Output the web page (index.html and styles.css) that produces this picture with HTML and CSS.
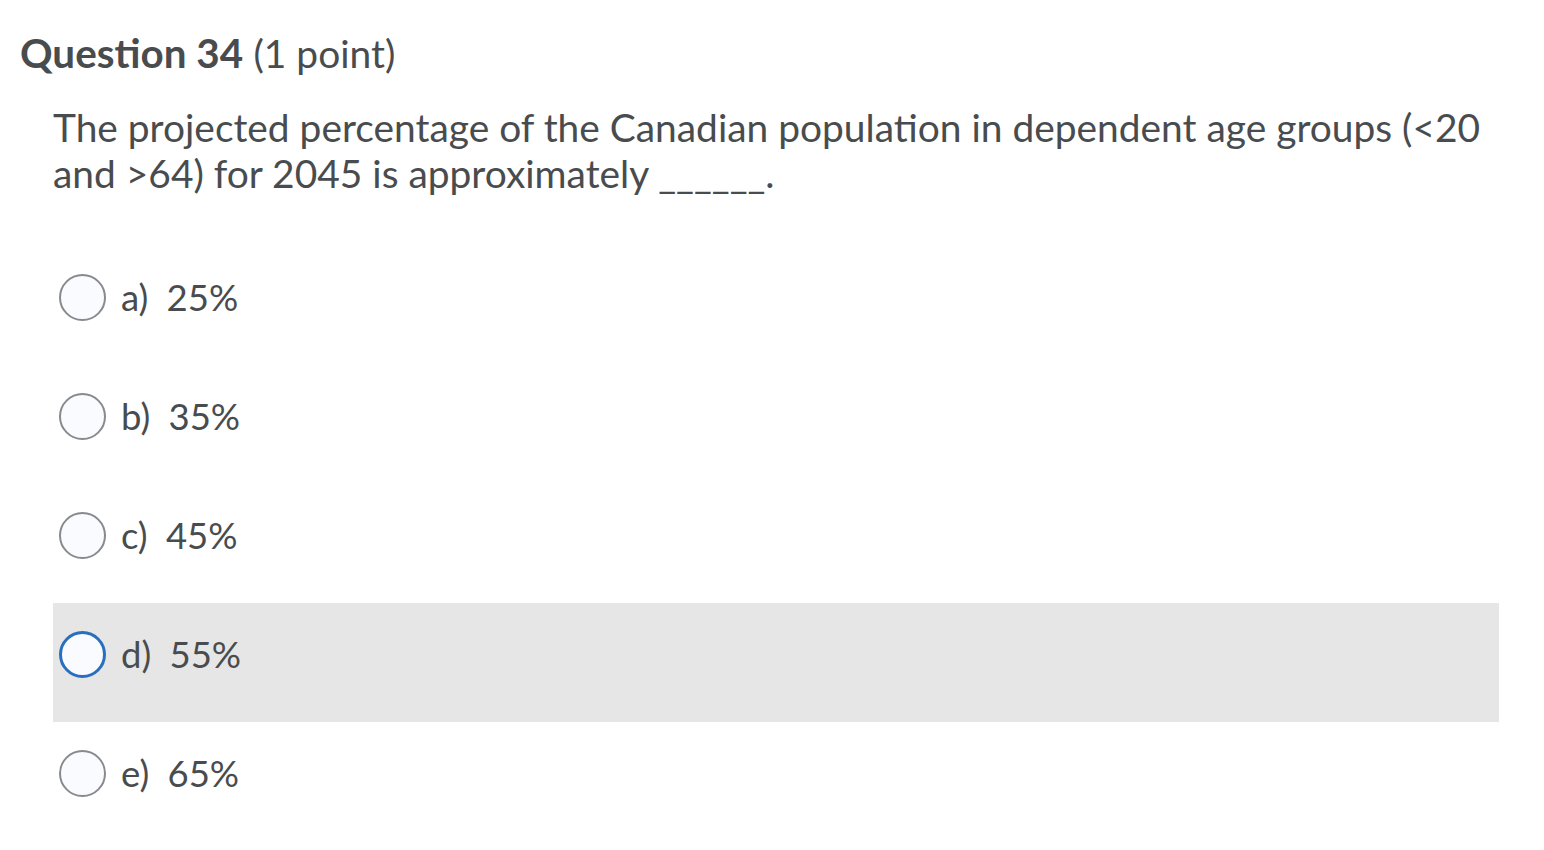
FILE: index.html
```html
<!DOCTYPE html>
<html lang="en">
<head>
<meta charset="utf-8">
<title>Question 34</title>
<link rel="stylesheet" href="styles.css">
</head>
<body>
<div class="page">
  <h2 class="q-title"><strong>Question 34</strong> <span class="points">(1 point)</span></h2>
  <div class="q-body">
    <p class="q-text">The projected percentage of the Canadian population in dependent age groups (&lt;20 and &gt;64) for 2045 is approximately ______.</p>
    <div class="options">
      <div class="option"><span class="radio"></span><span class="label"><span class="letter">a)</span> 25%</span></div>
      <div class="option"><span class="radio"></span><span class="label"><span class="letter">b)</span> 35%</span></div>
      <div class="option"><span class="radio"></span><span class="label"><span class="letter">c)</span> 45%</span></div>
      <div class="option focused"><span class="radio"></span><span class="label"><span class="letter">d)</span> 55%</span></div>
      <div class="option"><span class="radio"></span><span class="label"><span class="letter">e)</span> 65%</span></div>
    </div>
  </div>
</div>
</body>
</html>
```
FILE: styles.css
```css
html, body {
  margin: 0;
  padding: 0;
  background: #ffffff;
}
body {
  font-family: Lato, "Open Sans", sans-serif;
  color: #494c4e;
}
.page {
  padding: 29px 45px 0 20px;
}
.q-title {
  margin: 0;
  font-size: 40.4px;
  line-height: 48px;
  font-weight: 400;
}
.q-title strong {
  font-weight: 700;
}
.points {
  font-size: 38.9px;
}
.q-body {
  padding-left: 33px;
}
.q-text {
  margin: 27px 0 0 0;
  font-size: 38.9px;
  line-height: 46px;
}
.options {
  margin-top: 50px;
  display: flex;
  flex-direction: column;
}
.option {
  display: flex;
  align-items: flex-start;
  height: 119px;
  box-sizing: border-box;
  padding: 28px 0 0 6px;
}
.option.focused {
  background: #e6e6e6;
}
.radio {
  width: 47px;
  height: 47px;
  box-sizing: border-box;
  border-radius: 50%;
  border: 2px solid #878b8e;
  background: #f9fbff;
  flex: none;
}
.focused .radio {
  border: 3px solid #2a6fbe;
}
.label {
  margin-left: 15px;
  font-size: 36.5px;
  line-height: 47px;
}
.letter {
  margin-right: 9px;
}
```
